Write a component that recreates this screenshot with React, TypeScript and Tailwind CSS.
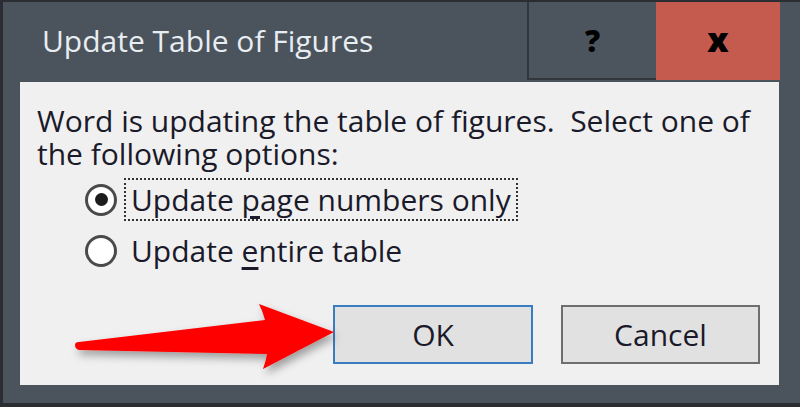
import React from 'react'

const font = { fontFamily: '"Open Sans", "Noto Sans", sans-serif' }

function Radio({ checked }: { checked?: boolean }) {
  return (
    <span className="flex h-[32px] w-[32px] shrink-0 items-center justify-center rounded-full border-[3px] border-[#4a4a4a] bg-white">
      {checked && <span className="h-[13px] w-[13px] rounded-full bg-[#1c1c1c]" />}
    </span>
  )
}

export default function App() {
  return (
    <div
      className="relative flex h-[407px] w-[800px] flex-col overflow-hidden border-t-2 border-b-[4px] border-l-[3px] border-[#2a2e32] bg-[#4b545c]"
      style={font}
    >
      {/* title bar */}
      <div className="flex h-[78px] shrink-0">
        <div className="flex flex-1 items-center pl-[39px] pb-[2px] text-[30px] text-[#e8edf2]">
          Update Table of Figures
        </div>
        <div className="flex w-[129px] items-center justify-center border-l-2 border-b-2 border-[#30363b] bg-[#4c555d] text-[30px] font-extrabold text-black">
          ?
        </div>
        <div className="flex w-[124px] items-center justify-center bg-[#c55a4f] pb-[3px] text-[34px] font-extrabold text-black">
          x
        </div>
        <div className="w-[20px]" />
      </div>

      {/* content */}
      <div className="ml-[17px] mr-[21px] mt-[2px] flex h-[303px] flex-col bg-[#f0f0f0] pl-[17px] pt-[22px] text-[30px] leading-[33px] text-[#1a1a2a]">
        <p>
          Word is updating the table of figures.&nbsp; Select one of
          <br />
          the following options:
        </p>

        <div className="mt-[8px] flex flex-col gap-[8px] pl-[48px]">
          <div className="flex items-center gap-[7px]">
            <Radio checked />
            <span className="border-2 border-dotted border-[#333] px-[5px] py-[2px] leading-[35px]">
              Update <u className="underline-offset-[5px]">p</u>age numbers only
            </span>
          </div>
          <div className="flex items-center gap-[14px]">
            <Radio />
            <span className="py-[4px] leading-[35px]">
              Update <u className="underline-offset-[5px]">e</u>ntire table
            </span>
          </div>
        </div>

        <div className="mt-auto mb-[21px] flex justify-end gap-[28px] pr-[19px]">
          <button className="h-[59px] w-[200px] border-2 border-[#3a7cc0] bg-[#e1e1e1] text-[30px] text-[#1a1a2a]">
            OK
          </button>
          <button className="h-[59px] w-[199px] border-2 border-[#6e6e6e] bg-[#e1e1e1] text-[30px] text-[#1a1a2a]">
            Cancel
          </button>
        </div>
      </div>

      {/* red arrow pointing at OK */}
      <svg className="absolute left-0 top-0" width="800" height="407" viewBox="0 0 800 407">
        <defs>
          <filter id="sh" x="-20%" y="-50%" width="140%" height="200%">
            <feDropShadow dx="3" dy="5" stdDeviation="4" floodColor="#000" floodOpacity="0.35" />
          </filter>
        </defs>
        <path
          d="M72 343 Q72 340 76 340 L262 318 Q260 310 256 302 L331 330 L260 367 Q263 359 264 352 L76 348 Q72 347 72 343 Z"
          fill="#ff0000"
          filter="url(#sh)"
        />
      </svg>
    </div>
  )
}
